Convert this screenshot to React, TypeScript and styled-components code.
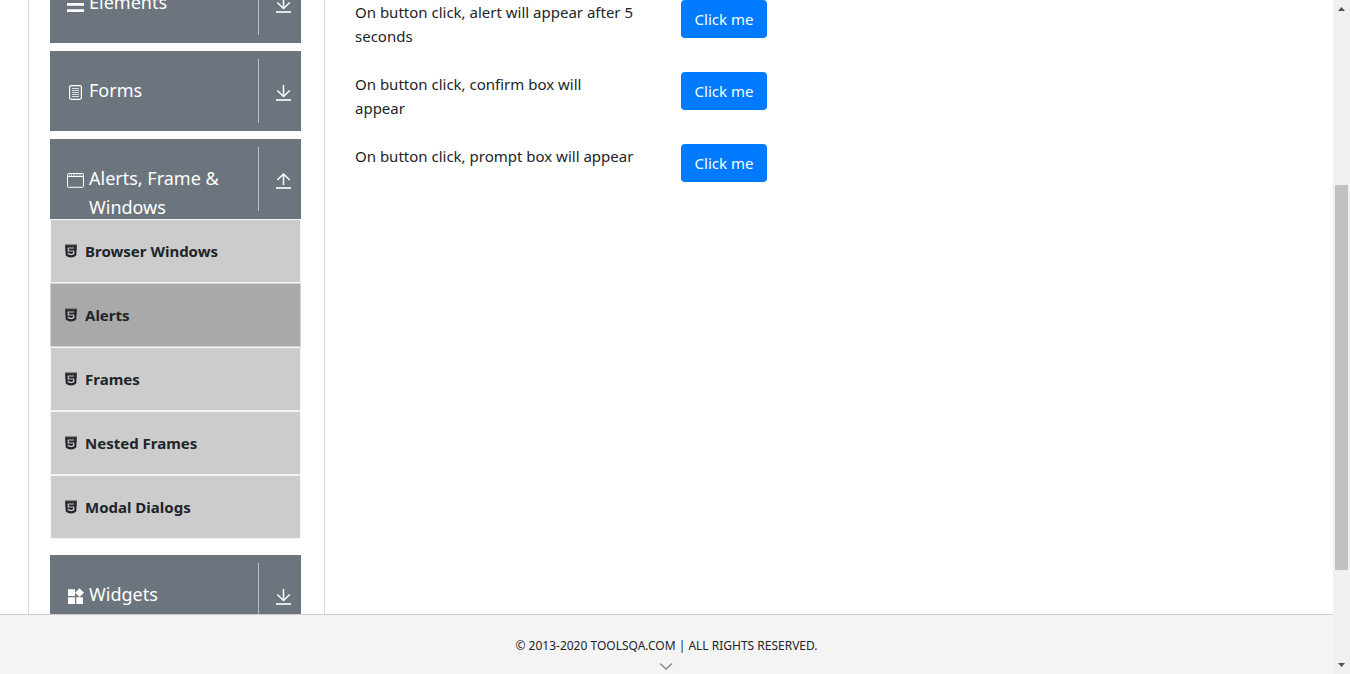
import React from "react";
import styled, { createGlobalStyle } from "styled-components";

const GlobalStyle = createGlobalStyle`
  *, *::before, *::after { box-sizing: border-box; }
  body {
    margin: 0;
    background: #fff;
    color: #212529;
    font-family: "Segoe UI", "Noto Sans", "Open Sans", sans-serif;
    font-size: 15px;
    line-height: 24px;
  }
`;

const Shell = styled.div`
  display: flex;
  height: 100vh;
  overflow: hidden;
`;

const Page = styled.div`
  flex: 1;
  min-width: 0;
  display: flex;
  flex-direction: column;
`;

const Body = styled.div`
  flex: 1;
  min-height: 0;
  display: flex;
  padding: 0 28px;
  overflow: hidden;
`;

const Sidebar = styled.nav`
  flex: 0 0 297px;
  padding: 0 23px 0 21px;
  border: solid #dcdcdc;
  border-width: 0 1px;
`;

const Groups = styled.div`
  display: flex;
  flex-direction: column;
  gap: 8px;
  margin-top: -37px;
`;

const GroupHeader = styled.button`
  display: flex;
  align-items: flex-start;
  width: 100%;
  height: 80px;
  padding: 8px 9px 0 17px;
  border: 0;
  background: #6c757d;
  color: #fff;
  font-family: inherit;
  font-size: 18px;
  line-height: 29px;
  text-align: left;
  cursor: pointer;
`;

const GroupIcon = styled.span`
  flex: 0 0 22px;
  display: flex;
  padding-top: 25px;
`;

const GroupTitle = styled.span`
  flex: 1;
  padding-top: 17px;
`;

const Toggle = styled.span`
  display: flex;
  align-items: center;
  height: 64px;
  padding: 4px 0 0 17px;
  border-left: 1px solid #b9bcc0;
`;

const SubList = styled.ul`
  margin: -8px 0 8px;
  padding: 0;
  list-style: none;
`;

const SubLink = styled.a<{ $active?: boolean }>`
  display: flex;
  align-items: center;
  gap: 8px;
  height: 64px;
  padding: 0 14px;
  border: 1px solid ${(p) => (p.$active ? "#ced2da" : "#f4f4f5")};
  background: ${(p) => (p.$active ? "#a9a9a9" : "#ccc")};
  color: #212529;
  font-weight: 700;
  text-decoration: none;
`;

const Content = styled.main`
  flex: 1;
  min-width: 0;
  padding-left: 30px;
`;

const AlertRow = styled.div`
  display: flex;
  align-items: flex-start;
  gap: 40px;
  margin-bottom: 24px;
`;

const AlertText = styled.span`
  flex: 0 0 286px;
  min-height: 48px;
  white-space: pre-line;
`;

const PrimaryButton = styled.button`
  width: 86px;
  height: 38px;
  padding: 0;
  border: 0;
  border-radius: 4px;
  background: #007bff;
  color: #fff;
  font: inherit;
  cursor: pointer;
`;

const Footer = styled.footer`
  display: flex;
  flex-direction: column;
  align-items: center;
  height: 60px;
  padding-top: 19px;
  border-top: 1px solid #ccc;
  background: #f4f4f4;
  font-size: 12px;
`;

const ScrollTrack = styled.div`
  flex: 0 0 17px;
  display: flex;
  flex-direction: column;
  align-items: center;
  justify-content: space-between;
  padding: 7px 2px;
  background: #f0f0f0;
`;

const ScrollThumb = styled.div`
  width: 13px;
  height: 57vh;
  margin-top: 81px;
  background: #c1c1c1;
`;

const ElementsIcon = () => (
  <svg width="17" height="17" viewBox="0 0 17 17" fill="currentColor" aria-hidden="true">
    <path d="M0 1h17v2.800H0zM0 7h17v2.800H0zM0 13.200h17V16H0z" />
  </svg>
);

const FormsIcon = () => (
  <svg width="17" height="17" viewBox="0 0 17 17" fill="none" stroke="currentColor" aria-hidden="true">
    <rect x="2.600" y="1.600" width="11.800" height="13.800" rx="1.800" strokeWidth="1.200" />
    <path d="M5 4.500h7M5 6.500h7M5 8.500h7M5 10.500h7M5 12.500h7" opacity=".75" />
  </svg>
);

const WindowIcon = () => (
  <svg width="17" height="17" viewBox="0 0 17 17" fill="none" stroke="currentColor" aria-hidden="true">
    <rect x=".5" y="1.500" width="16" height="13.800" rx="1" />
    <path d="M1 4.500h15" />
    <path d="M7 2.500h9M7 3.500h9" opacity=".25" />
    <path d="M2 3h1M4 3h1M6 3h1" strokeWidth="2" opacity=".6" />
  </svg>
);

const WidgetsIcon = () => (
  <svg width="17" height="17" viewBox="0 0 17 17" fill="currentColor" aria-hidden="true">
    <path d="M1 1.300h7V8H1zM1 9.300h7V16H1zM9.300 9.300H16V16H9.300zM12.500.3 17 4.700l-4.500 4.400L8.100 4.700z" />
  </svg>
);

const ArrowIcon = ({ up }: { up?: boolean }) => (
  <svg width="16" height="18" viewBox="0 0 16 18" fill="none" stroke="currentColor" aria-hidden="true">
    <path d={up ? "M7.500 13V2.500M1.300 8 7.500 2l6.200 6" : "M7.500 1v11M1.300 6.500 7.500 12.500l6.200-6"} strokeWidth="1.500" />
    <path d="M0 16h15" strokeWidth="1.600" />
  </svg>
);

const Html5Icon = () => (
  <svg width="12" height="14" viewBox="0 0 12 14" aria-hidden="true">
    <path d="M0 .5h12l-.8 11Q9 13.400 6 13.600 3 13.400.8 11.500z" fill="#212529" />
    <path d="M0 1h12" stroke="#ccc" opacity=".35" />
    <path d="M9.200 4H3.200V7H8.700V9.700L6 10.500 3.300 9.700V8.700" fill="none" stroke="#ccc" strokeWidth="1.200" />
  </svg>
);

const Triangle = ({ down }: { down?: boolean }) => (
  <svg width="7" height="4" viewBox="0 0 7 4" fill="#505050" aria-hidden="true">
    <path d={down ? "M0 0h7L3.500 4z" : "M0 4h7L3.500 0z"} />
  </svg>
);

const subItems = ["Browser Windows", "Alerts", "Frames", "Nested Frames", "Modal Dialogs"];

const prompts = [
  "On button click, alert will appear after 5 seconds",
  "On button click, confirm box will\nappear",
  "On button click, prompt box will appear",
];

const Group = ({ title, icon, open }: { title: string; icon: React.ReactNode; open?: boolean }) => (
  <GroupHeader type="button" aria-expanded={!!open}>
    <GroupIcon>{icon}</GroupIcon>
    <GroupTitle>{title}</GroupTitle>
    <Toggle>
      <ArrowIcon up={open} />
    </Toggle>
  </GroupHeader>
);

export default function App() {
  return (
    <Shell>
      <GlobalStyle />
      <Page>
        <Body>
          <Sidebar>
            <Groups>
              <Group title="Elements" icon={<ElementsIcon />} />
              <Group title="Forms" icon={<FormsIcon />} />
              <Group title="Alerts, Frame & Windows" icon={<WindowIcon />} open />
              <SubList>
                {subItems.map((label) => (
                  <li key={label}>
                    <SubLink href="#" $active={label === "Alerts"}>
                      <Html5Icon />
                      {label}
                    </SubLink>
                  </li>
                ))}
              </SubList>
              <Group title="Widgets" icon={<WidgetsIcon />} />
            </Groups>
          </Sidebar>
          <Content>
            {prompts.map((text, i) => (
              <AlertRow key={text}>
                <AlertText id={`prompt-${i}`}>{text}</AlertText>
                <PrimaryButton type="button" aria-describedby={`prompt-${i}`}>
                  Click me
                </PrimaryButton>
              </AlertRow>
            ))}
          </Content>
        </Body>
        <Footer>
          <span>© 2013-2020 TOOLSQA.COM | ALL RIGHTS RESERVED.</span>
          <svg width="16" height="16" viewBox="0 0 16 16" fill="none" stroke="#888" aria-hidden="true">
            <path d="M1 5.500l6 5.500 6-5.500" strokeWidth="1.300" />
          </svg>
        </Footer>
      </Page>
      <ScrollTrack aria-hidden="true">
        <Triangle />
        <ScrollThumb />
        <Triangle down />
      </ScrollTrack>
    </Shell>
  );
}
